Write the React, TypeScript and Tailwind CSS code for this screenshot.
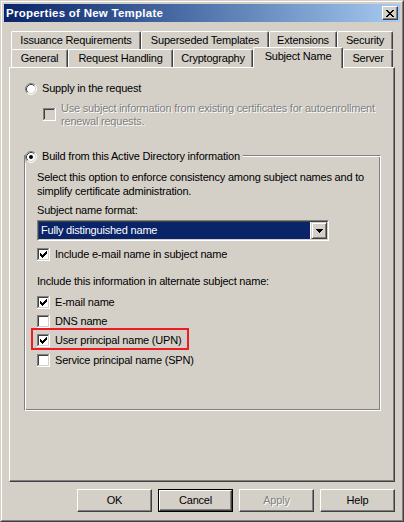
import React from "react";

const rows = (runs: number[][], ox: number, oy: number, fill = "#000") =>
  runs.map(([x, y, w], i) => (
    <rect key={i} x={ox + x} y={oy + y} width={w} height={1} fill={fill} />
  ));

function CheckBox({ checked, disabled }: { checked?: boolean; disabled?: boolean }) {
  return (
    <svg width="13" height="13" viewBox="0 0 13 13" shapeRendering="crispEdges" className="shrink-0">
      <rect x="0" y="0" width="13" height="13" fill="#ffffff" />
      <rect x="0" y="0" width="12" height="12" fill="#808080" />
      <rect x="1" y="1" width="11" height="11" fill="#d4d0c8" />
      <rect x="1" y="1" width="10" height="10" fill="#404040" />
      <rect x="2" y="2" width="9" height="9" fill={disabled ? "#d4d0c8" : "#ffffff"} />
      {checked &&
        rows(
          [
            [6, 0, 1],
            [5, 1, 2],
            [0, 2, 1],
            [4, 2, 3],
            [0, 3, 2],
            [3, 3, 3],
            [0, 4, 5],
            [1, 5, 3],
            [2, 6, 1],
          ],
          3,
          3
        )}
    </svg>
  );
}

function Radio({ checked }: { checked?: boolean }) {
  return (
    <svg width="12" height="12" viewBox="0 0 12 12" className="shrink-0">
      <circle cx="6" cy="6" r="5" fill="#ffffff" />
      <path d="M2.11 9.89 A5.5 5.5 0 0 1 9.89 2.11" stroke="#808080" fill="none" />
      <path d="M9.89 2.11 A5.5 5.5 0 0 1 2.11 9.89" stroke="#ffffff" fill="none" />
      <path d="M2.82 9.18 A4.5 4.5 0 0 1 9.18 2.82" stroke="#404040" fill="none" />
      <path d="M9.18 2.82 A4.5 4.5 0 0 1 2.82 9.18" stroke="#d4d0c8" fill="none" />
      {checked && <circle cx="6" cy="6" r="2" fill="#000" />}
    </svg>
  );
}

function Tab({ w, label }: { w: number; label: string }) {
  return (
    <div
      style={{ width: w }}
      className="h-[18px] shrink-0 rounded-t-[2px] border-t border-l border-r border-t-white border-l-white border-r-[#404040] shadow-[inset_-1px_0_#808080] flex items-center justify-center whitespace-nowrap"
    >
      {label}
    </div>
  );
}

function Button({ label, isDefault, disabled }: { label: string; isDefault?: boolean; disabled?: boolean }) {
  return (
    <div className={`w-[75px] h-[23px] ${isDefault ? "border border-black" : ""}`}>
      <div className="w-full h-full border border-t-white border-l-white border-r-[#404040] border-b-[#404040] shadow-[inset_-1px_-1px_#808080] flex items-center justify-center">
        <span className={disabled ? "text-[#808080] [text-shadow:1px_1px_0_#fff]" : ""}>{label}</span>
      </div>
    </div>
  );
}

function CheckRow({ label, checked, className = "" }: { label: string; checked?: boolean; className?: string }) {
  return (
    <div className={`flex items-center gap-[5px] h-[13px] ${className}`}>
      <CheckBox checked={checked} />
      <span className="whitespace-nowrap">{label}</span>
    </div>
  );
}

export default function App() {
  return (
    <div className="w-[404px] h-[522px] bg-[#d4d0c8] border border-t-[#d4d0c8] border-l-[#d4d0c8] border-r-[#404040] border-b-[#404040] font-['Liberation_Sans',Arial,sans-serif] text-[11px] leading-[13px] tracking-[-0.2px] text-black select-none">
      <div className="w-full h-full border border-t-white border-l-white border-r-[#808080] border-b-[#808080] p-[2px] flex flex-col">
        {/* Title bar */}
        <div className="h-[18px] bg-linear-to-r from-[#0a246a] to-[#a6caf0] flex items-center justify-between pl-[2px] pr-[2px]">
          <span className="text-white font-bold text-[11.5px] tracking-[0.25px] pt-[1px]">Properties of New Template</span>
          <div className="w-[16px] h-[14px] bg-[#d4d0c8] border border-t-white border-l-white border-r-[#404040] border-b-[#404040] shadow-[inset_-1px_-1px_#808080] flex items-center justify-center">
            <svg width="8" height="7" viewBox="0 0 8 7" shapeRendering="crispEdges">
              {rows(
                [
                  [0, 0, 2],
                  [6, 0, 2],
                  [1, 1, 2],
                  [5, 1, 2],
                  [2, 2, 4],
                  [3, 3, 2],
                  [2, 4, 4],
                  [1, 5, 2],
                  [5, 5, 2],
                  [0, 6, 2],
                  [6, 6, 2],
                ],
                0,
                0
              )}
            </svg>
          </div>
        </div>

        {/* Tabs */}
        <div className="mt-[9px] ml-[7px] flex flex-col">
          <div className="flex h-[18px]">
            <Tab w={130} label="Issuance Requirements" />
            <Tab w={128} label="Superseded Templates" />
            <Tab w={68} label="Extensions" />
            <Tab w={56} label="Security" />
          </div>
          <div className="flex items-end h-[18px]">
            <Tab w={57} label="General" />
            <Tab w={105} label="Request Handling" />
            <Tab w={80} label="Cryptography" />
            <div className="relative z-10 w-[90px] h-[21px] mb-[-1px] shrink-0 bg-[#d4d0c8] rounded-t-[2px] border-t border-l border-r border-t-white border-l-white border-r-[#404040] shadow-[inset_-1px_0_#808080] flex justify-center pt-[2px] whitespace-nowrap">
              Subject Name
            </div>
            <Tab w={50} label="Server" />
          </div>
        </div>

        {/* Panel */}
        <div className="relative ml-[5px] w-[386px] h-[415px] border border-t-white border-l-white border-r-[#404040] border-b-[#404040] shadow-[inset_-1px_-1px_#808080] pl-[15px] pt-[14px] flex flex-col">
          <div className="flex items-center gap-[5px] h-[13px]">
            <Radio />
            <span>Supply in the request</span>
          </div>

          <div className="ml-[18px] mt-[7px] flex items-start gap-[5px]">
            <div className="mt-[6px]">
              <CheckBox disabled />
            </div>
            <p className="text-[#808080] [text-shadow:1px_1px_0_#fff]">
              Use subject information from existing certificates for autoenrollment
              <br />
              renewal requests.
            </p>
          </div>

          {/* Group box */}
          <div className="relative ml-[-1px] mt-[27px] w-[357px] h-[256px] border border-t-[#808080] border-l-[#808080] border-r-white border-b-white shadow-[inset_1px_1px_#fff,inset_-1px_-1px_#808080] pl-[12px] pt-[14px] flex flex-col">
            <div className="absolute left-0 top-[-6px] h-[13px] bg-[#d4d0c8] pr-[3px] flex items-center gap-[5px]">
              <Radio checked />
              <span className="whitespace-nowrap">Build from this Active Directory information</span>
            </div>

            <p className="leading-[14px]">
              Select this option to enforce consistency among subject names and to
              <br />
              simplify certificate administration.
            </p>
            <div className="mt-[6px] h-[13px]">Subject name format:</div>

            <div className="mt-[3px] w-[292px] h-[21px] border border-t-[#808080] border-l-[#808080] border-r-white border-b-white">
              <div className="w-full h-full border border-t-[#404040] border-l-[#404040] border-r-[#d4d0c8] border-b-[#d4d0c8] bg-white flex">
                <div className="flex-1 bg-[#0a246a] text-white flex items-center pl-[2px] mr-[1px]">
                  Fully distinguished name
                </div>
                <div className="w-[16px] h-full bg-[#d4d0c8] border border-t-[#d4d0c8] border-l-[#d4d0c8] border-r-[#404040] border-b-[#404040] shadow-[inset_1px_1px_#fff,inset_-1px_-1px_#808080] flex items-center justify-center">
                  <svg width="7" height="4" viewBox="0 0 7 4" shapeRendering="crispEdges">
                    {rows(
                      [
                        [0, 0, 7],
                        [1, 1, 5],
                        [2, 2, 3],
                        [3, 3, 1],
                      ],
                      0,
                      0
                    )}
                  </svg>
                </div>
              </div>
            </div>

            <CheckRow className="mt-[7px]" checked label="Include e-mail name in subject name" />

            <div className="mt-[14px] h-[13px]">Include this information in alternate subject name:</div>
            <CheckRow className="mt-[8px]" checked label="E-mail name" />
            <CheckRow className="mt-[6px]" label="DNS name" />
            <div className="ml-[-6px] w-[158px] border-2 border-[#ed1c24] pl-[4px] pt-[4px] pb-[1px]">
              <CheckRow checked label="User principal name (UPN)" />
            </div>
            <CheckRow className="mt-[4px]" label="Service principal name (SPN)" />
          </div>
        </div>

        {/* Buttons */}
        <div className="mt-[7px] flex justify-end gap-[6px] pr-[5px]">
          <Button label="OK" />
          <Button label="Cancel" isDefault />
          <Button label="Apply" disabled />
          <Button label="Help" />
        </div>
      </div>
    </div>
  );
}
